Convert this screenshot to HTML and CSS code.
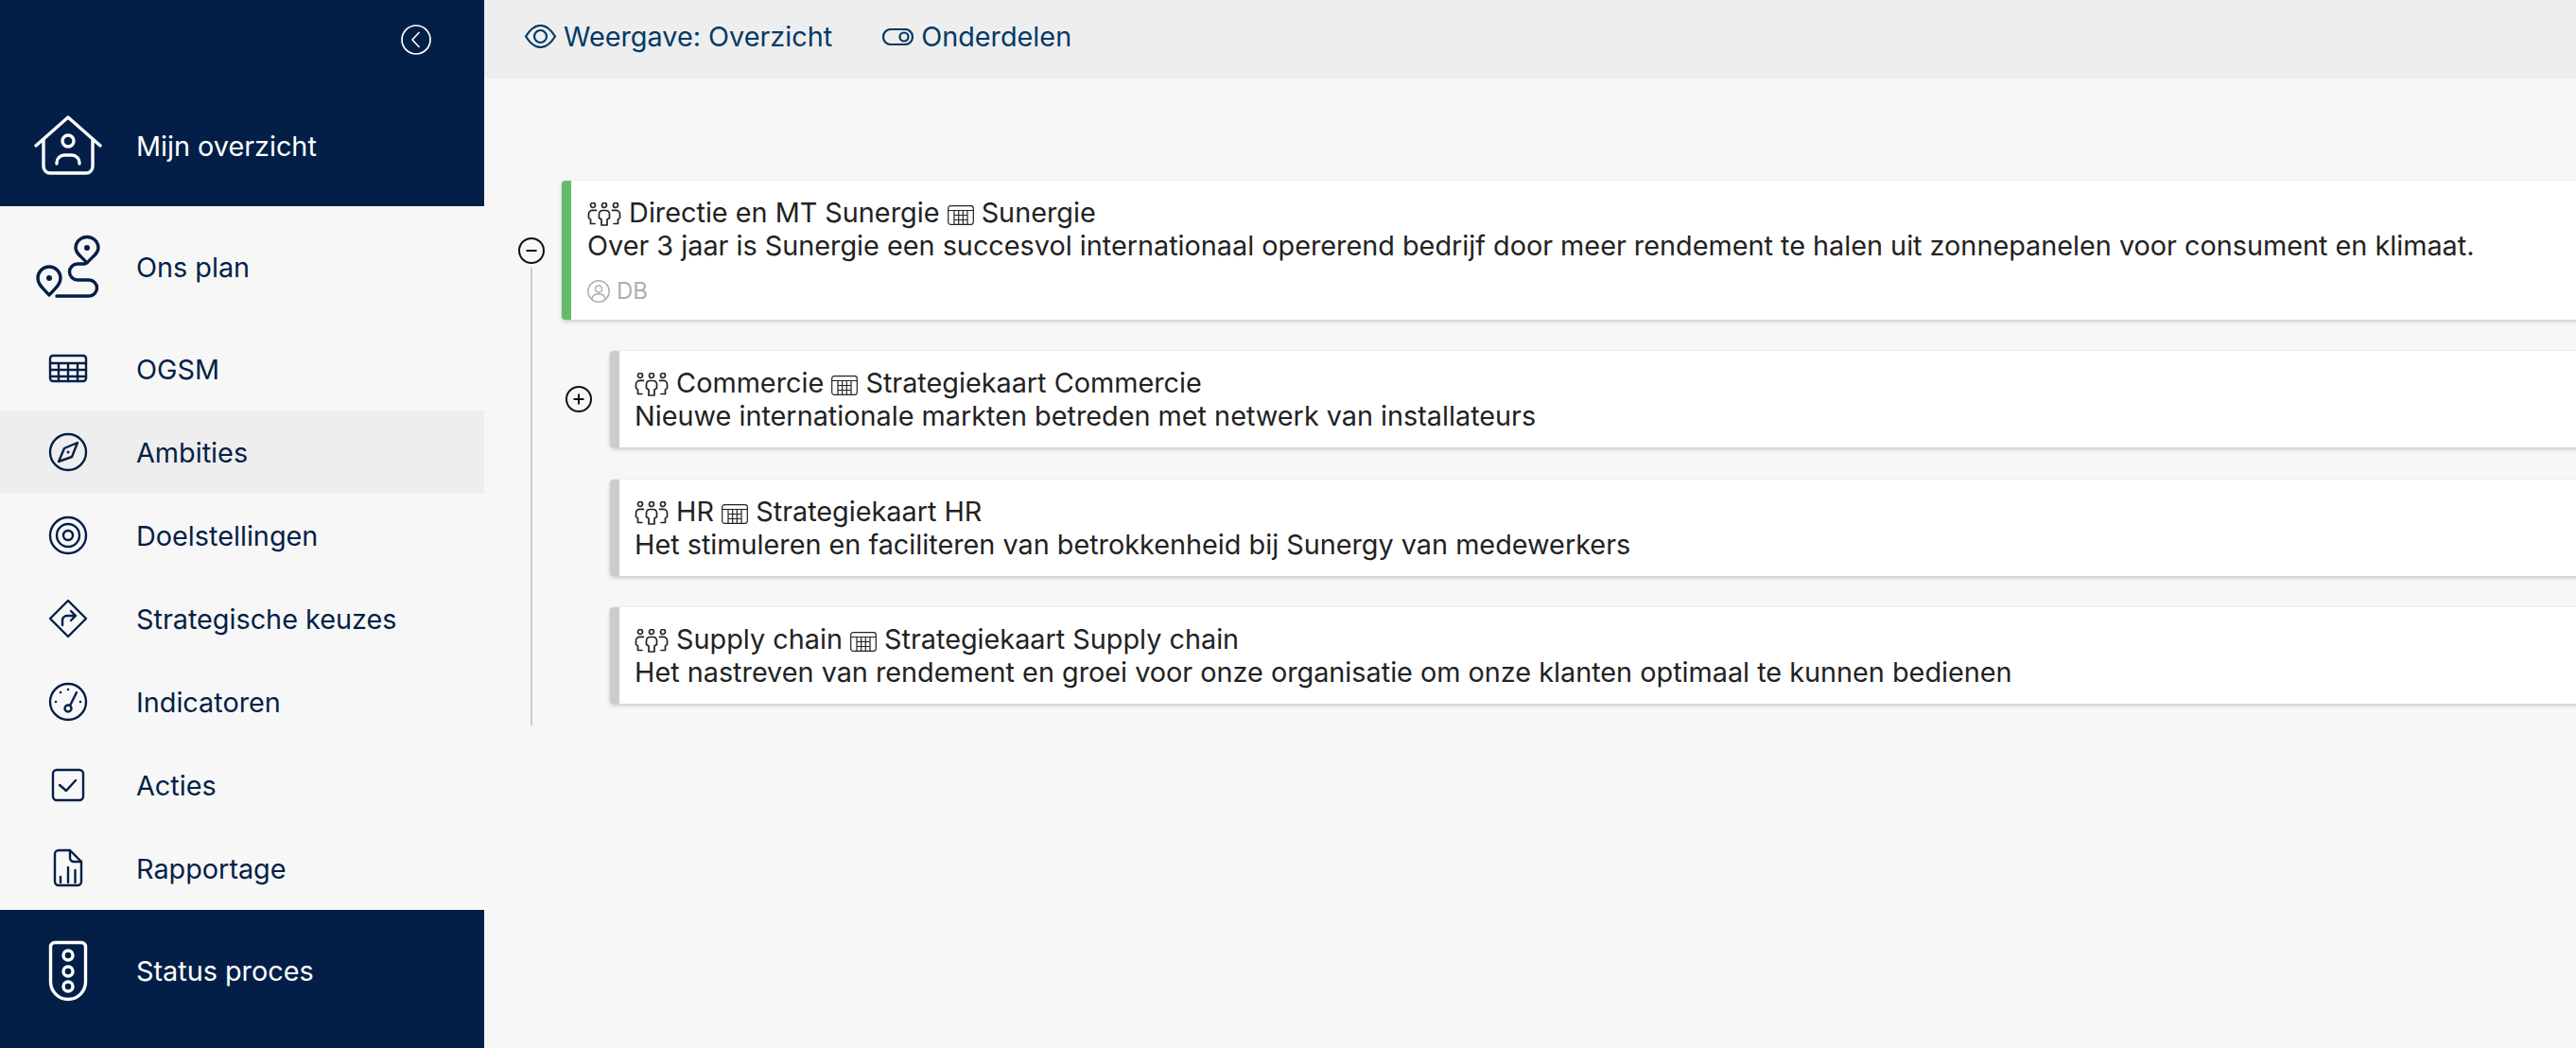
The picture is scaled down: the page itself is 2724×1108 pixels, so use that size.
FILE: index.html
```html
<!DOCTYPE html>
<html lang="nl">
<head>
<meta charset="utf-8">
<title>Ambities</title>
<link rel="stylesheet" href="styles.css">
</head>
<body>
<svg class="defs" width="0" height="0" aria-hidden="true">
  <symbol id="team" viewBox="0 0 36 25">
    <g fill="none" stroke="currentColor" stroke-width="1.700" stroke-linejoin="round" stroke-linecap="round">
      <circle cx="6" cy="3" r="2.500"/><circle cx="18" cy="3" r="2.500"/><circle cx="30" cy="3" r="2.500"/>
      <path d="M12.500 12a4 4 0 0 1 4-3.500h3a4 4 0 0 1 4 3.500v4.500l-2.500 1.500v6h-6v-6l-2.500-1.500z"/>
      <path d="M9.500 8.400H5.500a4 4 0 0 0-4 4v4l2 1.500v4.600h4.500"/>
      <path d="M26.500 8.400h4a4 4 0 0 1 4 4v4l-2 1.500v4.600h-4.500"/>
    </g>
  </symbol>
  <symbol id="grid" viewBox="0 0 28 21">
    <g fill="none" stroke="currentColor" stroke-width="1.200">
      <rect x="0.700" y="0.700" width="26.600" height="19.600" rx="2.500"/>
      <path d="M0.700 5.500h26.600M7 10.500h14M7 15.500h14M7 5.500v14.800M11.700 5.500v14.800M16.300 5.500v14.800M21 5.500v14.800"/>
    </g>
  </symbol>
</svg>
<div class="app">
  <aside class="sidebar">
    <div class="navy-block">
      <div class="collapse-row">
        <svg class="collapse" viewBox="0 0 32 32" width="32" height="32"><circle cx="16" cy="16" r="15" fill="none" stroke="currentColor" stroke-width="1.700"/><path d="M19 8.500 L12 16 L19 23.500" fill="none" stroke="currentColor" stroke-width="1.700" stroke-linecap="round" stroke-linejoin="round"/></svg>
      </div>
      <a class="item item-home">
        <span class="ico"><svg viewBox="0 0 72 72" class="s3"><path d="M2 35L36 5L70 35M10 28V57a7 7 0 0 0 7 7H55a7 7 0 0 0 7-7V28"/><circle cx="36" cy="30" r="6"/><path d="M24 54v-1a8 8 0 0 1 8-8h8a8 8 0 0 1 8 8v1"/></svg></span>
        <span>Mijn overzicht</span>
      </a>
    </div>
    <nav class="nav">
      <a class="item item-plan">
        <span class="ico"><svg viewBox="0 0 72 72" class="s3"><path d="M56 32C50 25 44 22 44 16a12 11.500 0 0 1 24 0C68 22 62 25 56 32Z"/><circle class="dot" cx="56" cy="16" r="3"/><path d="M16 66C10 59 4 55 4 48a12 12 0 0 1 24 0C28 55 22 59 16 66Z"/><circle class="dot" cx="16" cy="48" r="3"/><path d="M54 33H46a8.500 8.500 0 0 0 0 17H58a8.500 8.500 0 0 1 0 17H24"/></svg></span>
        <span class="label">Ons plan</span>
      </a>
      <a class="item">
        <span class="ico"><svg viewBox="0 0 72 72" class="s2"><rect x="17" y="22" width="38" height="27" rx="3"/><path d="M17 30H55M17 37H55M17 44H55M26 30V49M36 30V49M46 30V49"/></svg></span>
        <span class="label">OGSM</span>
      </a>
      <a class="item item-active">
        <span class="ico"><svg viewBox="0 0 72 72" class="s2"><circle cx="36" cy="36" r="19"/><path d="M46 26L32 32L26 46L40 41Z"/><circle class="dot" cx="36" cy="36" r="1.500"/></svg></span>
        <span class="label">Ambities</span>
      </a>
      <a class="item">
        <span class="ico"><svg viewBox="0 0 72 72" class="s2"><circle cx="36" cy="36" r="19"/><circle cx="36" cy="36" r="12"/><circle cx="36" cy="36" r="5"/></svg></span>
        <span class="label">Doelstellingen</span>
      </a>
      <a class="item">
        <span class="ico"><svg viewBox="0 0 72 72" class="s2"><path d="M36 17L55 36L36 55L17 36Z"/><path d="M30 43V38a5 5 0 0 1 5-5H44M39 28l5 5l-5 5"/></svg></span>
        <span class="label">Strategische keuzes</span>
      </a>
      <a class="item">
        <span class="ico"><svg viewBox="0 0 72 72" class="s2"><circle cx="36" cy="36" r="19"/><circle cx="36" cy="43" r="3.500"/><path d="M38 40L45 26"/><circle class="dot" cx="36" cy="23" r="1.300"/><circle class="dot" cx="28" cy="26" r="1.300"/><circle class="dot" cx="23" cy="36" r="1.300"/><circle class="dot" cx="49" cy="36" r="1.300"/></svg></span>
        <span class="label">Indicatoren</span>
      </a>
      <a class="item">
        <span class="ico"><svg viewBox="0 0 72 72" class="s2"><rect x="20" y="20" width="32" height="32" rx="4"/><path d="M27 36L34 42L44 31"/></svg></span>
        <span class="label">Acties</span>
      </a>
      <a class="item">
        <span class="ico"><svg viewBox="0 0 72 72" class="s2"><path d="M22 21a4 4 0 0 1 4-4H38L50 29V50a4 4 0 0 1-4 4H26a4 4 0 0 1-4-4Z"/><path d="M38 17V25a4 4 0 0 0 4 4H50M28 51V45M36 51V35M43.500 51V38"/></svg></span>
        <span class="label">Rapportage</span>
      </a>
    </nav>
    <div class="navy-block status-block">
      <a class="item item-status">
        <span class="ico"><svg viewBox="0 0 72 72" class="s3"><path d="M22 5.500H50a4.500 4.500 0 0 1 4.500 4.500V47a18.500 18.500 0 0 1-37 0V10A4.500 4.500 0 0 1 22 5.500Z"/><circle cx="36" cy="19" r="5"/><circle cx="36" cy="36" r="5"/><circle cx="36" cy="52" r="5"/></svg></span>
        <span>Status proces</span>
      </a>
    </div>
  </aside>
  <main class="main">
    <header class="topbar">
      <a class="tool">
        <svg viewBox="0 0 33 25" width="33" height="25" class="tool-ico"><path d="M1 12.500C6 4.500 11 1 16.500 1S27 4.500 32 12.500C27 20.500 22 24 16.500 24S6 20.500 1 12.500Z"/><circle cx="16.500" cy="12.500" r="6.500"/></svg>
        <span>Weergave: Overzicht</span>
      </a>
      <a class="tool">
        <svg viewBox="0 0 33 18" width="33" height="18" class="tool-ico"><rect x="1" y="1" width="31" height="16" rx="8"/><circle cx="23" cy="9" r="4.500"/></svg>
        <span>Onderdelen</span>
      </a>
    </header>
    <section class="tree">
      <div class="tree-line"></div>
      <div class="row row-root">
        <button class="toggle" type="button"><svg viewBox="0 0 28 28" width="28" height="28"><circle cx="14" cy="14" r="13"/><path d="M8.500 14H19.500"/></svg></button>
        <article class="card card-green">
          <div class="line"><svg class="i-team"><use href="#team"/></svg> Directie en MT Sunergie <svg class="i-grid"><use href="#grid"/></svg> Sunergie</div>
          <div class="line">Over 3 jaar is Sunergie een succesvol internationaal opererend bedrijf door meer rendement te halen uit zonnepanelen voor consument en klimaat.</div>
          <div class="meta"><svg viewBox="0 0 24 24" width="24" height="24" class="avatar"><circle cx="12" cy="12" r="11.200"/><circle cx="12" cy="9.500" r="3.500"/><path d="M4.800 20c.8-3.500 3.500-5.200 7.200-5.200s6.400 1.700 7.200 5.200"/></svg><span>DB</span></div>
        </article>
      </div>
      <div class="row row-child">
        <button class="toggle" type="button"><svg viewBox="0 0 28 28" width="28" height="28"><circle cx="14" cy="14" r="13"/><path d="M8.500 14H19.500M14 8.500V19.500"/></svg></button>
        <article class="card">
          <div class="line"><svg class="i-team"><use href="#team"/></svg> Commercie <svg class="i-grid"><use href="#grid"/></svg> Strategiekaart Commercie</div>
          <div class="line">Nieuwe internationale markten betreden met netwerk van installateurs</div>
        </article>
      </div>
      <div class="row row-child">
        <span class="toggle-space"></span>
        <article class="card">
          <div class="line"><svg class="i-team"><use href="#team"/></svg> HR <svg class="i-grid"><use href="#grid"/></svg> Strategiekaart HR</div>
          <div class="line">Het stimuleren en faciliteren van betrokkenheid bij Sunergy van medewerkers</div>
        </article>
      </div>
      <div class="row row-child">
        <span class="toggle-space"></span>
        <article class="card">
          <div class="line"><svg class="i-team"><use href="#team"/></svg> Supply chain <svg class="i-grid"><use href="#grid"/></svg> Strategiekaart Supply chain</div>
          <div class="line">Het nastreven van rendement en groei voor onze organisatie om onze klanten optimaal te kunnen bedienen</div>
        </article>
      </div>
    </section>
  </main>
</div>
</body>
</html>
```
FILE: styles.css
```css
* { box-sizing: border-box; }
html, body { margin: 0; height: 100%; overflow: hidden; }
body { font-family: Inter, "Liberation Sans", sans-serif; background: #f7f7f7; }
.defs { position: absolute; }

.app { display: flex; height: 1108px; }

.sidebar { width: 512px; flex: none; display: flex; flex-direction: column; background: #f7f7f7; color: #031f47; }
.navy-block { background: #031f47; color: #fff; }
.collapse-row { height: 92px; display: flex; justify-content: flex-end; align-items: flex-start; padding: 26px 56px 0 0; }
.collapse { display: block; }

.item { display: flex; align-items: center; height: 88px; font-size: 28.800px; line-height: 1; }
.label { padding-top: 2px; }
.ico { width: 144px; flex: none; display: flex; justify-content: center; }
.ico svg { width: 72px; height: 72px; display: block; fill: none; stroke: currentColor; stroke-linecap: round; stroke-linejoin: round; }
.s2 { stroke-width: 2.400; }
.s3 { stroke-width: 3.400; }
.ico .dot { fill: currentColor; stroke: none; }
.item-home { height: 126px; }
.item-plan { height: 128px; }
.item-active { background: #eeeeee; }
.nav { display: flex; flex-direction: column; }
.status-block { flex: 1; padding-bottom: 16px; display: flex; align-items: center; }
.item-status { width: 100%; }

.main { flex: 1; min-width: 0; overflow: hidden; display: flex; flex-direction: column; }
.topbar { height: 83px; flex: none; background: #eeeeee; display: flex; align-items: center; gap: 53px; padding: 0 0 6px 43px; color: #003a66; font-size: 28.800px; }
.tool { display: flex; align-items: center; gap: 8px; }
.tool-ico { fill: none; stroke: currentColor; stroke-width: 2.200; display: block; }

.tree { position: relative; padding-top: 108px; color: #222; font-size: 28.800px; line-height: 35px; }
.tree-line { position: absolute; left: 49px; top: 200px; width: 2px; height: 484px; background: #ccc; }
.row { display: flex; align-items: center; gap: 18px; }
.row-root { padding-left: 36px; }
.row-child { padding-left: 86px; gap: 19px; margin-top: 33.300px; }
.toggle { width: 28px; height: 28px; padding: 0; border: 0; background: none; flex: none; display: block; }
.toggle svg { display: block; fill: none; stroke: #111; stroke-width: 2; }
.toggle-space { width: 28px; flex: none; }

.card { flex: none; width: 2400px; background: #fff; border-left: 10px solid #ccc; border-radius: 4px; padding: 16px 0 16px 16px; box-shadow: 0 2px 4px rgba(0, 0, 0, .18), 0 0 2px rgba(0, 0, 0, .06); }
.card-green { border-left-color: #66bb6a; padding: 16px 0 13px 17px; }
.line { white-space: nowrap; }
.i-team { width: 36px; height: 25px; vertical-align: -4px; color: #222; }
.i-grid { width: 28px; height: 21px; vertical-align: -3px; color: #222; }
.meta { display: flex; align-items: center; gap: 7px; margin-top: 13px; height: 35px; color: #aeaeae; font-size: 24px; }
.avatar { fill: none; stroke: currentColor; stroke-width: 1.500; display: block; }
```
